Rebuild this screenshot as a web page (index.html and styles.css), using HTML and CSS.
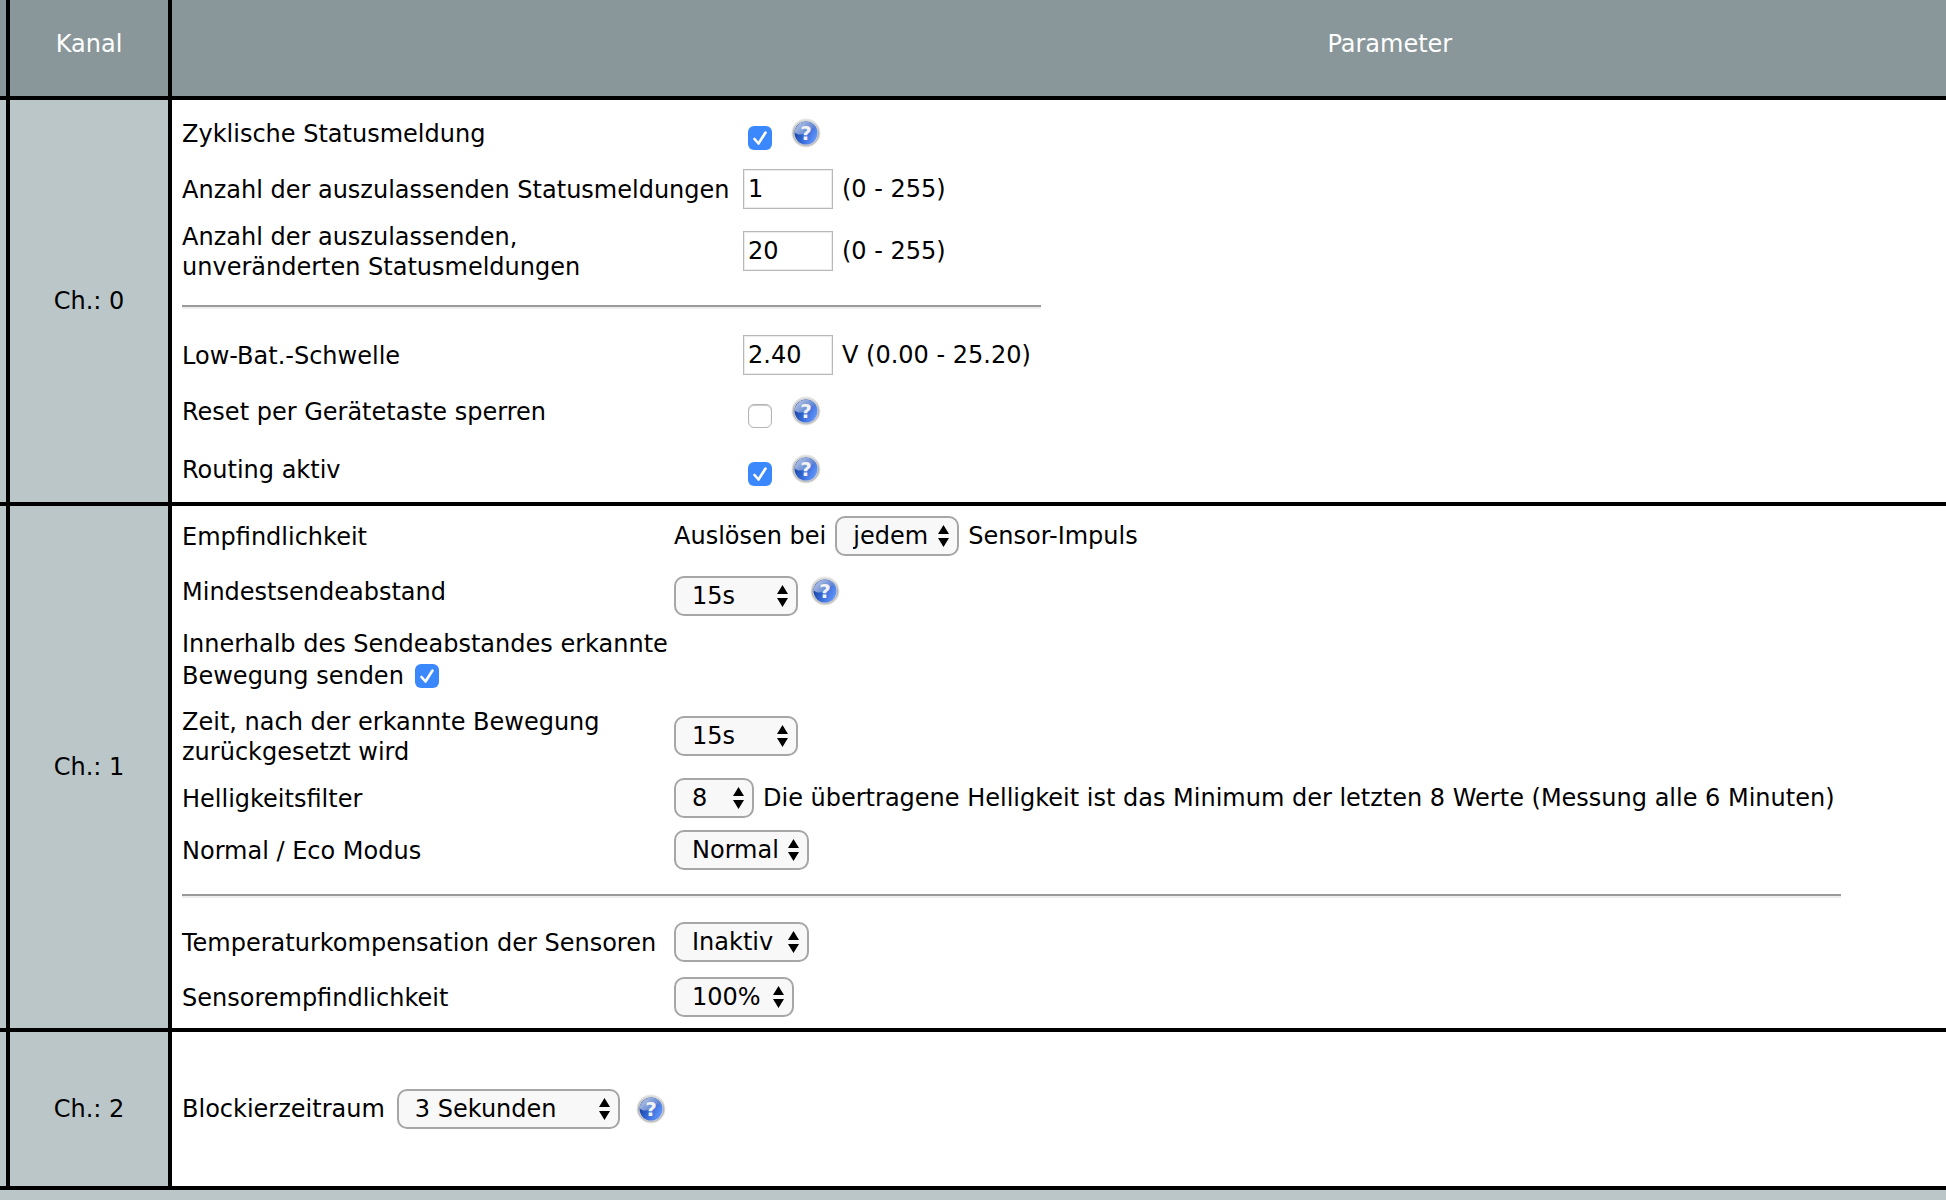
FILE: index.html
```html
<!DOCTYPE html>
<html lang="de">
<head>
<meta charset="utf-8">
<meta name="viewport" content="width=device-width, initial-scale=1">
<title>Parameter</title>
<link rel="stylesheet" href="styles.css">
</head>
<body>
<svg class="sprite" width="0" height="0" aria-hidden="true">
  <defs>
    <linearGradient id="ring" x1="0" y1="0" x2="0" y2="1">
      <stop offset="0" stop-color="#dededc"/>
      <stop offset="0.5" stop-color="#b4b4b4"/>
      <stop offset="1" stop-color="#c2c2c0"/>
    </linearGradient>
    <linearGradient id="ball" x1="0" y1="0.3" x2="1" y2="0.8">
      <stop offset="0" stop-color="#123d9c"/>
      <stop offset="0.5" stop-color="#386bd8"/>
      <stop offset="1" stop-color="#6a9dff"/>
    </linearGradient>
    <linearGradient id="gloss" x1="0" y1="0" x2="1" y2="0.6">
      <stop offset="0" stop-color="#c3cde4"/>
      <stop offset="1" stop-color="#4b76d2"/>
    </linearGradient>
    <symbol id="help" viewBox="0 0 30 30">
      <circle cx="15" cy="15" r="14.5" fill="#e9e9e7"/>
      <circle cx="15" cy="15" r="13.5" fill="url(#ring)"/>
      <circle cx="15" cy="15" r="12" fill="#d9dbe0"/>
      <circle cx="15" cy="15" r="11.5" fill="url(#ball)"/>
      <path d="M3.6 14.5A11.5 11.5 0 0 1 25.5 10.300C20 9.500 17 13 13.500 15.500C10 17.500 6 16.500 3.600 14.500Z" fill="url(#gloss)"/>
      <text x="15" y="22" text-anchor="middle" class="help-mark">?</text>
    </symbol>
  </defs>
</svg>

<table class="channels">
  <colgroup>
    <col class="col-edge">
    <col class="col-channel">
    <col>
  </colgroup>
  <thead>
    <tr>
      <td></td>
      <th scope="col">Kanal</th>
      <th scope="col" class="head-params">Parameter</th>
    </tr>
  </thead>
  <tbody>
    <tr>
      <td class="side"></td>
      <th scope="row" class="side">Ch.: 0</th>
      <td class="params">
        <div class="grid grid-device">
          <label for="cyclic">Zyklische Statusmeldung</label>
          <div class="control with-help">
            <input type="checkbox" id="cyclic" checked>
            <button type="button" class="help" aria-label="Hilfe"><svg><use href="#help"/></svg></button>
          </div>

          <label for="skip">Anzahl der auszulassenden Statusmeldungen</label>
          <div class="control"><input type="text" id="skip" value="1"><span>(0 - 255)</span></div>

          <label for="skip-same">Anzahl der auszulassenden,<br>unveränderten Statusmeldungen</label>
          <div class="control"><input type="text" id="skip-same" value="20"><span>(0 - 255)</span></div>

          <hr>

          <label for="lowbat">Low-Bat.-Schwelle</label>
          <div class="control"><input type="text" id="lowbat" value="2.40"><span>V (0.00 - 25.20)</span></div>

          <label for="reset">Reset per Gerätetaste sperren</label>
          <div class="control with-help">
            <input type="checkbox" id="reset">
            <button type="button" class="help" aria-label="Hilfe"><svg><use href="#help"/></svg></button>
          </div>

          <label for="routing">Routing aktiv</label>
          <div class="control with-help">
            <input type="checkbox" id="routing" checked>
            <button type="button" class="help" aria-label="Hilfe"><svg><use href="#help"/></svg></button>
          </div>
        </div>
      </td>
    </tr>
    <tr>
      <td class="side"></td>
      <th scope="row" class="side">Ch.: 1</th>
      <td class="params">
        <div class="grid grid-sensor">
          <label for="sens">Empfindlichkeit</label>
          <div class="control">
            <span>Auslösen bei</span>
            <select id="sens" class="w-medium"><option>jedem</option></select>
            <span>Sensor-Impuls</span>
          </div>

          <label for="interval">Mindestsendeabstand</label>
          <div class="control with-help">
            <select id="interval" class="w-medium"><option>15s</option></select>
            <button type="button" class="help" aria-label="Hilfe"><svg><use href="#help"/></svg></button>
          </div>

          <div class="motion">
            <label for="motion">Innerhalb des Sendeabstandes erkannte<br>Bewegung senden</label>
            <input type="checkbox" id="motion" checked>
          </div>
          <div class="control"></div>

          <label for="hold">Zeit, nach der erkannte Bewegung<br>zurückgesetzt wird</label>
          <div class="control">
            <select id="hold" class="w-medium"><option>15s</option></select>
          </div>

          <label for="filter">Helligkeitsfilter</label>
          <div class="control">
            <select id="filter" class="w-small"><option>8</option></select>
            <span>Die übertragene Helligkeit ist das Minimum der letzten 8 Werte (Messung alle 6 Minuten)</span>
          </div>

          <label for="mode">Normal / Eco Modus</label>
          <div class="control">
            <select id="mode" class="w-large"><option>Normal</option></select>
          </div>

          <hr>

          <label for="temp">Temperaturkompensation der Sensoren</label>
          <div class="control">
            <select id="temp" class="w-large"><option>Inaktiv</option></select>
          </div>

          <label for="level">Sensorempfindlichkeit</label>
          <div class="control">
            <select id="level" class="w-percent"><option>100%</option></select>
          </div>
        </div>
      </td>
    </tr>
    <tr class="channel-block">
      <td class="side"></td>
      <th scope="row" class="side">Ch.: 2</th>
      <td class="params">
        <div class="control block-time">
          <label for="block">Blockierzeitraum</label>
          <select id="block" class="w-wide"><option>3 Sekunden</option></select>
          <button type="button" class="help" aria-label="Hilfe"><svg><use href="#help"/></svg></button>
        </div>
      </td>
    </tr>
  </tbody>
</table>
</body>
</html>
```
FILE: styles.css
```css
* {
  box-sizing: border-box;
}

body {
  margin: 0;
  background: #bbc6c8;
  color: #000;
  font: 24px/30px Verdana, "DejaVu Sans", sans-serif;
  white-space: nowrap;
}

.sprite {
  position: absolute;
}

.channels {
  width: 100%;
  table-layout: fixed;
  border-collapse: separate;
  border-spacing: 0;
}

.col-edge {
  width: 6px;
}

.col-channel {
  width: 162px;
}

th,
td {
  padding: 0;
  border: 0 solid #000;
  border-bottom-width: 4px;
  font-weight: normal;
  vertical-align: middle;
}

th,
.params {
  border-left-width: 4px;
}

thead th,
thead td {
  height: 100px;
  padding-bottom: 8px;
  background: #89979b;
  color: #fff;
}

thead .head-params {
  padding-left: 34vw;
}

.side {
  background: #bbc6c8;
}

.params {
  padding: 4px 10px;
  background: #fff;
}

.channel-block {
  height: 158px;
}

/* Label and control pairs */
.grid {
  display: grid;
  width: max-content;
  align-items: center;
}

.grid label {
  padding-top: 2px;
}

.grid-device {
  grid-template-columns: 561px minmax(298px, auto);
  grid-template-rows: 58px 54px 70px 42px 54px 58px 58px;
}

.grid-sensor {
  grid-template-columns: 492px minmax(1167px, auto);
  grid-template-rows: 52px 58px 78px 76px 48px 56px 36px 56px 54px;
}

.motion {
  padding-top: 2px;
  line-height: 32px;
}

.motion input {
  margin: 0 0 0 4px;
  vertical-align: -4px;
}

.control {
  display: flex;
  align-items: center;
  gap: 9px;
}

.with-help {
  gap: 12px;
}

.with-help input,
.with-help select {
  margin-top: 10px;
}

.with-help input {
  margin-left: 5px;
  margin-right: 7px;
}

.block-time {
  gap: 12px;
}

.block-time .help {
  margin-left: 4px;
}

hr {
  grid-column: 1 / -1;
  width: 100%;
  height: 4px;
  margin: 0;
  border: 0;
  border-top: 2px solid #9a9a9a;
  border-bottom: 2px solid #eee;
}

/* Form controls */
input,
select {
  margin: 0;
  color: inherit;
  font: inherit;
}

input[type="text"] {
  width: 90px;
  height: 40px;
  padding: 0 4px;
  border: 1px solid #b8b8b8;
  border-radius: 0;
  background: #fff;
  box-shadow: inset 0 0 0 1px #ececec;
}

input[type="checkbox"] {
  appearance: none;
  width: 24px;
  height: 24px;
  border: 1px solid #b4b4b4;
  border-radius: 6px;
  background: #fff;
  box-shadow: inset 0 1px 1px #c8c8c8;
}

input[type="checkbox"]:checked {
  border: 0;
  background: #3b88fd url("data:image/svg+xml,%3Csvg xmlns='http://www.w3.org/2000/svg' viewBox='0 0 24 24'%3E%3Cpath d='M6.500 13L10.500 17.500L17.500 6.500' fill='none' stroke='%23fff' stroke-width='2.600' stroke-linecap='round' stroke-linejoin='round'/%3E%3C/svg%3E") center / 24px 24px no-repeat;
  box-shadow: none;
}

select {
  appearance: none;
  height: 40px;
  padding: 0 24px 0 16px;
  border: 2px solid #a6a6a6;
  border-radius: 10px;
  background: #f8f8f8 url("data:image/svg+xml,%3Csvg xmlns='http://www.w3.org/2000/svg' viewBox='0 0 11 22'%3E%3Cpath d='M5.500 0L11 9H0ZM0 13H11L5.500 22Z'/%3E%3C/svg%3E") right 8px center / 11px 22px no-repeat;
}

.w-small {
  width: 80px;
}

.w-percent {
  width: 120px;
}

.w-medium {
  width: 124px;
}

.w-large {
  width: 135px;
}

.w-wide {
  width: 223px;
}

.help {
  width: 30px;
  height: 30px;
  padding: 0;
  border: 0;
  background: none;
}

.help svg {
  display: block;
  width: 30px;
  height: 30px;
}

.help-mark {
  fill: #f1f2f4;
  font: bold 20px "DejaVu Sans", sans-serif;
}
```
